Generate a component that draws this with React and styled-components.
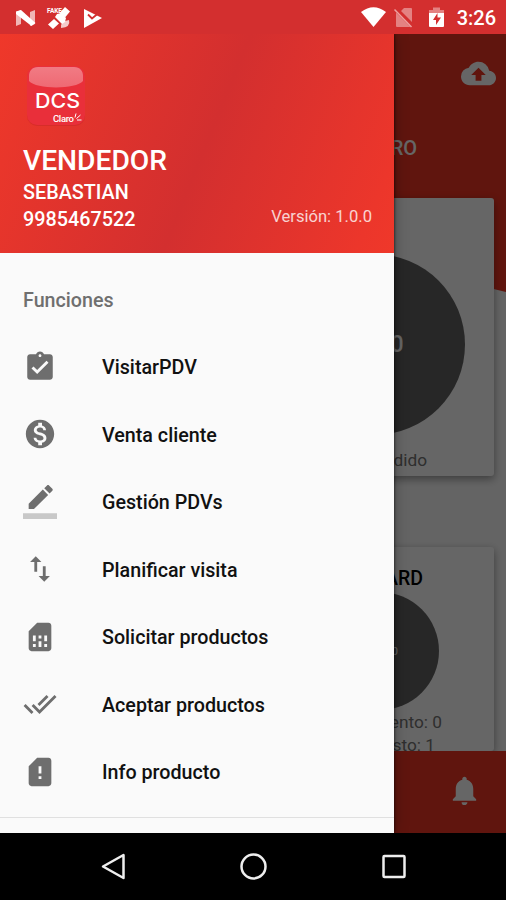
import React from "react";
import styled, { createGlobalStyle } from "styled-components";
import {
  MdAssignmentTurnedIn,
  MdMonetizationOn,
  MdSimCard,
  MdSimCardAlert,
  MdDoneAll,
  MdCloudUpload,
  MdNotifications
} from "react-icons/md";

const GlobalStyle = createGlobalStyle`
  * {
    box-sizing: border-box;
  }
  body {
    margin: 0;
    font-family: Roboto, "Liberation Sans", sans-serif;
  }
`;

const Screen = styled.div`
  display: flex;
  flex-direction: column;
  width: 506px;
  height: 900px;
  overflow: hidden;
  background: #000;
`;

const StatusBar = styled.header`
  display: flex;
  align-items: center;
  justify-content: space-between;
  flex: none;
  height: 34px;
  padding: 2px 10px 0 15px;
  background: #d32f2f;
  color: #fff;
`;

const StatusGroup = styled.div`
  display: flex;
  align-items: center;
  gap: ${props => props.gap}px;
  svg {
    display: block;
  }
`;

const Clock = styled.time`
  font-size: 20px;
  font-weight: 500;
  line-height: 24px;
`;

const Body = styled.div`
  display: flex;
  flex: none;
  height: 799px;
  overflow: hidden;
`;

const Drawer = styled.aside`
  position: relative;
  z-index: 1;
  display: flex;
  flex-direction: column;
  width: 394px;
  background: #fafafa;
  box-shadow: 0 0 3px rgba(0, 0, 0, 0.8), 0 0 14px rgba(0, 0, 0, 0.3);
`;

const DrawerHeader = styled.div`
  height: 219px;
  padding: 31px 22px 0 23px;
  background: linear-gradient(112deg, #ef382a 0%, #d32f2f 52%, #ec362b 92%, #ef382a 100%);
  color: #fff;
`;

const Logo = styled.svg`
  display: block;
  margin-left: 3px;
`;

const Role = styled.h1`
  margin: 17px 0 0;
  font-size: 28.2px;
  font-weight: 500;
  line-height: 34px;
`;

const Name = styled.div`
  padding-top: ${props => (props.spaced ? 1 : 0)}px;
  font-size: 19.8px;
  font-weight: 500;
  line-height: 27px;
`;

const PhoneRow = styled.div`
  display: flex;
  justify-content: space-between;
  align-items: center;
`;

const Version = styled.span`
  margin-top: -5px;
  font-size: 16.6px;
  line-height: 22px;
  opacity: 0.78;
`;

const Subheader = styled.h2`
  margin: 0;
  height: 81px;
  padding: 34px 0 0 23px;
  color: #6f6f6f;
  font-size: 19.7px;
  font-weight: 500;
  line-height: 27px;
`;

const Menu = styled.ul`
  margin: 0;
  padding: 0;
  list-style: none;
  border-bottom: 1.5px solid #e0e0e0;
  height: 484px;
`;

const MenuItem = styled.li`
  display: flex;
  align-items: center;
  height: 67.5px;
  padding-left: 23px;
  color: #111;
  font-size: 19.7px;
  font-weight: 500;
`;

const MenuIcon = styled.span`
  display: flex;
  width: 79px;
  margin-top: -2px;
  color: #6e6e6e;
  svg {
    width: 34px;
    height: 34px;
  }
`;

const Behind = styled.main`
  position: relative;
  display: flex;
  flex-direction: column;
  align-items: flex-end;
  width: 112px;
  overflow: hidden;
  background: #fafafa;
`;

// red area at the top of the dashboard, with the slanted lower edge
const Backdrop = styled.div`
  position: absolute;
  inset: 0 0 auto 0;
  height: 258px;
  background: #f03523;
  clip-path: polygon(0 0, 100% 0, 100% 100%, 0 231px);
`;

const Scrim = styled.div`
  position: absolute;
  inset: 0;
  background: rgba(0, 0, 0, 0.6);
`;

const TopBar = styled.div`
  position: relative;
  display: flex;
  flex: none;
  align-items: center;
  height: 80px;
  padding: 0 10px 1px 0;
  color: #fff;
`;

const Title = styled.div`
  position: relative;
  flex: none;
  height: 84px;
  padding: 21px 89px 0 0;
  color: #fff;
  font-size: 20px;
  font-weight: 500;
  line-height: 26px;
`;

const Card = styled.section`
  position: relative;
  display: flex;
  flex: none;
  flex-direction: column;
  align-items: center;
  width: 240px;
  height: ${props => props.height}px;
  margin: 0 12px ${props => props.gap || 0}px 0;
  padding-top: ${props => props.top}px;
  border-radius: 3px;
  background: #fff;
  box-shadow: 0 3px 9px rgba(0, 0, 0, 0.4);
`;

const Circle = styled.div`
  display: flex;
  flex: none;
  align-items: center;
  justify-content: flex-end;
  width: ${props => props.size}px;
  height: ${props => props.size}px;
  margin-left: ${props => props.shift || 0}px;
  padding-right: ${props => props.inset}px;
  border-radius: 50%;
  background: #636363;
  color: #fff;
  font-size: ${props => props.font}px;
  font-weight: ${props => props.weight || 400};
`;

const CardTitle = styled.div`
  align-self: flex-end;
  margin-right: 71px;
  color: #000;
  font-size: 19.5px;
  font-weight: 500;
  line-height: 26px;
`;

const Label = styled.div`
  align-self: flex-end;
  margin: ${props => props.top || 0}px ${props => props.end}px 0 0;
  color: #757575;
  font-size: 17.3px;
  line-height: 23px;
`;

const BottomBar = styled.div`
  position: relative;
  display: flex;
  align-items: center;
  justify-content: flex-end;
  flex: none;
  width: 100%;
  height: 82px;
  padding: 0 24px 3px 0;
  background: #f03523;
  color: #fff;
`;

const NavBar = styled.nav`
  display: grid;
  grid-template-columns: repeat(3, 140.5px);
  justify-content: center;
  justify-items: center;
  align-items: center;
  height: 67px;
  background: #000;
`;

const BorderColorIcon = () => (
  <svg viewBox="0 0 24 24" fill="currentColor">
    <path d="M17.75 7L14 3.25l-10 10V17h3.75l10-10zm2.96-2.96c.39-.39.39-1.02 0-1.41L18.37.29c-.39-.39-1.02-.39-1.41 0L15 2.25 18.75 6l1.96-1.96z" />
    <path fillOpacity=".36" d="M0 20h24v4H0z" />
  </svg>
);

const SwapIcon = () => (
  <svg viewBox="0 0 24 24" fill="currentColor">
    <path d="M16 17.01V10h-2v7.01h-3L15 21l4-3.99h-3zM9 3L5 6.99h3V14h2V6.99h3L9 3z" />
  </svg>
);

// sim card with the cut corner and the six contact pads
const SimIcon = () => (
  <svg viewBox="0 0 24 24" fill="currentColor">
    <path d="M19.99 4c0-1.100-.89-2-1.990-2h-8L4 8v12c0 1.100.9 2 2 2h12.010c1.100 0 1.990-.9 1.990-2l-.01-16zM9 19H7v-2h2v2zm8 0h-2v-2h2v2zm-8-4H7v-4h2v4zm4 4h-2v-4h2v4zm0-6h-2v-2h2v2zm4 2h-2v-4h2v4z" />
  </svg>
);

const items = [
  { label: "VisitarPDV", icon: MdAssignmentTurnedIn },
  { label: "Venta cliente", icon: MdMonetizationOn },
  { label: "Gestión PDVs", icon: BorderColorIcon },
  { label: "Planificar visita", icon: SwapIcon },
  { label: "Solicitar productos", icon: SimIcon },
  { label: "Aceptar productos", icon: MdDoneAll },
  { label: "Info producto", icon: MdSimCardAlert }
];

const AppLogo = () => (
  <Logo width="60" height="62" viewBox="0 0 60 62">
    <defs>
      <linearGradient id="gloss" x1="0" y1="0" x2="0" y2="1">
        <stop offset="0" stopColor="#f17b84" />
        <stop offset="1" stopColor="#ef6973" />
      </linearGradient>
    </defs>
    <rect x="1" y="3" width="58" height="58" rx="10" fill="#b71c24" opacity=".3" />
    <rect x="1" y="1" width="58" height="59" rx="10" fill="#e92f3a" />
    <path d="M3 11c0-5 3-9 9-9h36c6 0 9 4 9 9v5C50 24.500 10 24.500 3 16z" fill="url(#gloss)" />
    <text x="9" y="43" fill="#fff" fontSize="20.500" fontFamily="Inter" fontWeight="500" textLength="45" lengthAdjust="spacingAndGlyphs">
      DCS
    </text>
    <text x="27" y="57" fill="#fff" fontSize="9.500" fontFamily="Roboto" fontWeight="500" textLength="21">
      Claro
    </text>
    <path d="M49 52.500l1-4M50.500 53.500l4-3.500M51 55h4.500" stroke="#fff" strokeWidth="1" />
  </Logo>
);

const StatusIcons = () => (
  <StatusGroup gap={10}>
    <svg width="21" height="18" viewBox="0 0 21 18">
      <path d="M1 3l5-2v14l-5 2zM15 3l5-2v14l-5 2z" fill="#fff" opacity=".65" />
      <path d="M1 2.500L6 1l14.500 13-4 3L1 5z" fill="#fff" />
    </svg>
    <svg width="26" height="24" viewBox="0 0 26 24">
      <g fill="#fff">
        <path d="M19 1l5 4.500-5 6-5.500-4.500zM8 13l5 4.500-6 5.500-5-4.500z" />
        <path d="M11 8l4-1 5 5-1 4-3 2-7-7z" />
        <path d="M15 22q-1-7 8-8 2 7-8 8z" opacity=".75" />
      </g>
      <text x="1" y="7" fill="#fff" fontSize="6.500" fontWeight="700" fontFamily="Roboto" textLength="15">
        FAKE
      </text>
    </svg>
    <svg width="20" height="20" viewBox="0 0 20 20">
      <path d="M2 1l18 9-18 10z" fill="#fff" />
      <path d="M6 6.500l4 4 9-7.500" fill="none" stroke="#d32f2f" strokeWidth="1.800" />
    </svg>
  </StatusGroup>
);

const SystemIcons = () => (
  <StatusGroup gap={0}>
    <svg width="96" height="24" viewBox="0 0 96 24">
      <path d="M0 6Q12.500-3.500 25 6L12.500 21z" fill="#fff" />
      <g fill="#fff" opacity=".4">
        <path d="M40 5l3-3h7q1 0 1 1v13zM35 6.500L49.500 21H36q-1 0-1-1z" />
      </g>
      <path d="M33.500 3.500l17 17.500" stroke="#eda0a0" strokeWidth="1.500" />
      <path d="M68 4h4V1.500h7V4h4v4H68z" fill="#fff" opacity=".4" />
      <path d="M68 7h15v13q0 1-1 1H69q-1 0-1-1z" fill="#fff" />
      <path d="M76.500 7l-4.500 7h3v5l5-7.500h-3.500z" fill="#d32f2f" />
    </svg>
    <Clock>3:26</Clock>
  </StatusGroup>
);

class App extends React.Component {
  render() {
    return (
      <Screen>
        <GlobalStyle />
        <StatusBar>
          <StatusIcons />
          <SystemIcons />
        </StatusBar>
        <Body>
          <Drawer>
            <DrawerHeader>
              <AppLogo />
              <Role>VENDEDOR</Role>
              <Name spaced>SEBASTIAN</Name>
              <PhoneRow>
                <Name>9985467522</Name>
                <Version>Versión: 1.0.0</Version>
              </PhoneRow>
            </DrawerHeader>
            <Subheader>Funciones</Subheader>
            <Menu>
              {items.map(({ label, icon: Icon }) => (
                <MenuItem key={label}>
                  <MenuIcon>
                    <Icon />
                  </MenuIcon>
                  {label}
                </MenuItem>
              ))}
            </Menu>
          </Drawer>
          <Behind>
            <Backdrop />
            <TopBar>
              <MdCloudUpload size={35} />
            </TopBar>
            <Title>RO</Title>
            <Card height={278} top={56} gap={71}>
              <Circle size={181} inset={61} font={23} weight={500}>0</Circle>
              <Label top={14} end={67}>dido</Label>
            </Card>
            <Card height={204} top={19}>
              <CardTitle>ARD</CardTitle>
              <Circle size={118} shift={12} inset={41} font={11}>0</Circle>
              <Label top={1} end={52}>ento: 0</Label>
              <Label end={59}>sto: 1</Label>
            </Card>
            <BottomBar>
              <MdNotifications size={35} />
            </BottomBar>
            <Scrim />
          </Behind>
        </Body>
        <NavBar>
          <svg width="26" height="28" viewBox="0 0 26 28">
            <path d="M3 13.500L23.500 2v23z" fill="none" stroke="#eee" strokeWidth="2.500" strokeLinejoin="round" />
          </svg>
          <svg width="28" height="28" viewBox="0 0 28 28">
            <circle cx="14.500" cy="13.500" r="12" fill="none" stroke="#eee" strokeWidth="2.500" />
          </svg>
          <svg width="26" height="26" viewBox="0 0 26 26">
            <rect x="2.500" y="2" width="21" height="21" rx="1" fill="none" stroke="#eee" strokeWidth="2.500" />
          </svg>
        </NavBar>
      </Screen>
    );
  }
}

export default App;
